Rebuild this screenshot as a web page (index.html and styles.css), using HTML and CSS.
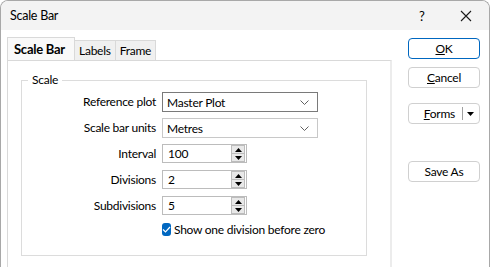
FILE: index.html
```html
<!DOCTYPE html>
<html>
<head>
<meta charset="utf-8">
<link rel="stylesheet" href="styles.css">
<title>Scale Bar</title>
</head>
<body>

<div class="window">
  <div class="titlebar">
    <span class="title">Scale Bar</span>
    <span class="help">?</span>
    <span class="close">
      <svg width="12" height="12" viewBox="0 0 12 12"><path d="M1 1 L11 11 M11 1 L1 11" stroke="#1a1a1a" stroke-width="1.1" fill="none"/></svg>
    </span>
  </div>

  <div class="content">
    <div class="tabarea">
      <div class="tabs">
        <div class="tab selected">Scale Bar</div>
        <div class="tab">Labels</div>
        <div class="tab">Frame</div>
      </div>
      <div class="panel">
        <fieldset class="group">
          <legend>Scale</legend>
          <div class="form">
            <label>Reference plot</label>
            <div class="combo active">
              <span>Master Plot</span>
              <svg class="chev" width="9" height="5" viewBox="0 0 9 5"><path d="M0.5 0.5 L4.5 4.5 L8.5 0.5" stroke="#606060" fill="none"/></svg>
            </div>

            <label>Scale bar units</label>
            <div class="combo">
              <span>Metres</span>
              <svg class="chev" width="9" height="5" viewBox="0 0 9 5"><path d="M0.5 0.5 L4.5 4.5 L8.5 0.5" stroke="#606060" fill="none"/></svg>
            </div>

            <label>Interval</label>
            <div class="spin">
              <span>100</span>
              <div class="arrows">
                <div class="up"><svg width="7" height="4" viewBox="0 0 7 4"><path d="M0 4 L3.5 0 L7 4 Z" fill="#000"/></svg></div>
                <div class="down"><svg width="7" height="4" viewBox="0 0 7 4"><path d="M0 0 L3.5 4 L7 0 Z" fill="#000"/></svg></div>
              </div>
            </div>

            <label>Divisions</label>
            <div class="spin">
              <span>2</span>
              <div class="arrows">
                <div class="up"><svg width="7" height="4" viewBox="0 0 7 4"><path d="M0 4 L3.5 0 L7 4 Z" fill="#000"/></svg></div>
                <div class="down"><svg width="7" height="4" viewBox="0 0 7 4"><path d="M0 0 L3.5 4 L7 0 Z" fill="#000"/></svg></div>
              </div>
            </div>

            <label>Subdivisions</label>
            <div class="spin">
              <span>5</span>
              <div class="arrows">
                <div class="up"><svg width="7" height="4" viewBox="0 0 7 4"><path d="M0 4 L3.5 0 L7 4 Z" fill="#000"/></svg></div>
                <div class="down"><svg width="7" height="4" viewBox="0 0 7 4"><path d="M0 0 L3.5 4 L7 0 Z" fill="#000"/></svg></div>
              </div>
            </div>

            <span></span>
            <div class="check">
              <span class="box"><svg width="9" height="7" viewBox="0 0 9 7"><path d="M1 3.5 L3.5 6 L8 1" stroke="#fff" stroke-width="1.2" fill="none"/></svg></span>
              <span>Show one division before zero</span>
            </div>
          </div>
        </fieldset>
      </div>
    </div>

    <div class="buttons">
      <div class="btn default"><u>O</u>K</div>
      <div class="btn"><u>C</u>ancel</div>
      <div class="btn split">
        <span class="main"><u>F</u>orms</span>
        <span class="sep"></span>
        <svg width="7" height="4" viewBox="0 0 7 4"><path d="M0 0 L3.5 4 L7 0 Z" fill="#000"/></svg>
      </div>
      <div class="btn saveas">Save As</div>
    </div>
  </div>
</div>

</body>
</html>
```

FILE: styles.css
```css
html, body { margin: 0; padding: 0; background: #ffffff; }
body { font-family: Lato, "Noto Sans", sans-serif; font-size: 12px; color: #000000;
       letter-spacing: -0.25px; white-space: nowrap; }

.window { width: 490px; height: 267px; box-sizing: border-box;
          border: 1px solid #a8a8a8; border-bottom: none;
          border-radius: 8px 8px 0 0; overflow: hidden; background: #ffffff; }

.titlebar { height: 29px; background: #f3f3f3; display: flex; align-items: center; }
.title { padding-left: 9px; flex: 1; font-size: 12.5px; }
.help { width: 14px; margin-right: 27px; font-size: 13px; }
.close { width: 12px; margin-right: 17px; display: flex; }

.content { display: flex; padding-top: 8px; }

.tabarea { margin-left: 6px; width: 385px; }
.tabs { display: flex; align-items: flex-end; height: 22px; }
.tab { height: 19px; line-height: 19px; padding: 0 4px; background: #f0f0f0;
       border: 1px solid #d9d9d9; border-bottom: none; margin-left: -1px; }
.tab.selected { height: 22px; line-height: 22px; padding: 0 6px; margin-left: 0;
                font-weight: bold; font-size: 13px; background: #f9f9f9;
                width: 54px; }

.panel { height: 220px; border: 1px solid #d9d9d9; border-right: 2px solid #ececec;
         border-bottom: none; padding: 12px 23px 0 13px; }

.group { margin: 0; padding: 5px 0 0 0; border: 1px solid #dcdcdc; height: 176px; }
.group legend { padding: 0 4px; margin-left: 6px; line-height: 14px; }

.form { display: grid; grid-template-columns: 134px 156px; column-gap: 6px;
        row-gap: 6px; grid-auto-rows: 20px; }
.form label { text-align: right; line-height: 20px; }

.combo { border: 1px solid #c8c8c8; display: flex; align-items: center;
         justify-content: space-between; padding: 0 8px 0 4px; }
.combo.active { border-color: #7a7a7a; }
.chev { display: block; }

.spin { width: 85px; height: 19px; box-sizing: border-box; border: 1px solid #bcbcbc;
        display: flex; align-items: center; justify-content: space-between; padding-left: 5px; }
.arrows { width: 14px; height: 17px; display: flex; flex-direction: column;
          margin-right: 1px; }
.arrows .up, .arrows .down { flex: 1; background: #e8e8e8; border: 1px solid #bcbcbc;
          display: flex; align-items: center; justify-content: center; }
.arrows .up { border-bottom: none; }

.check { display: flex; align-items: center; height: 14px; }
.check .box { width: 13px; height: 13px; border-radius: 3px; background: #0067c0;
              display: flex; align-items: center; justify-content: center; margin-right: 3px; }

.buttons { margin-left: 16px; width: 72px; display: flex; flex-direction: column; }
.btn { height: 21px; box-sizing: border-box; border: 1px solid #d0d0d0; border-radius: 4px;
       display: flex; align-items: center; justify-content: center; margin-bottom: 8px; }
.btn.default { border-color: #0067c0; }
.btn.split { margin-top: 7px; justify-content: flex-end; padding-right: 5px; }
.btn.split .sep { width: 1px; height: 13px; background: #a0a0a0; margin: 0 4px 0 7px; }
.btn.saveas { margin-top: 29px; }
```
